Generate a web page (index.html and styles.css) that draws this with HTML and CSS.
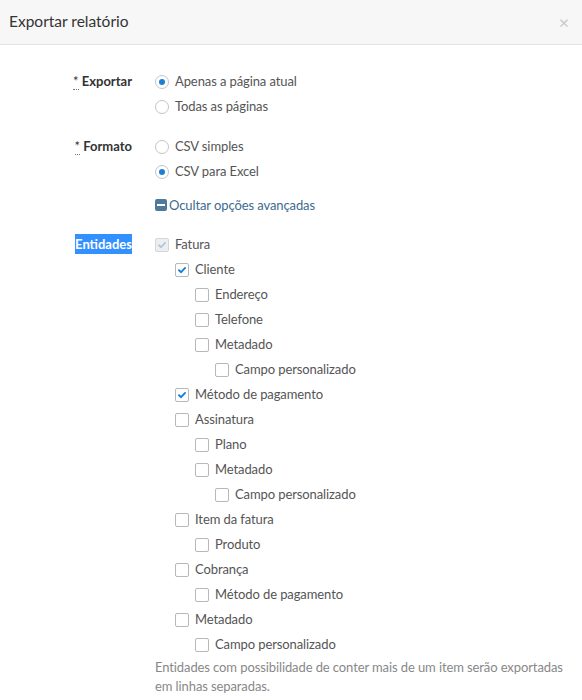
FILE: index.html
```html
<!DOCTYPE html>
<html lang="pt">
<head>
<meta charset="utf-8">
<title>Exportar relatório</title>
<link rel="stylesheet" href="styles.css">
</head>
<body>
<div class="modal">
  <div class="modal-header">
    <h1 class="modal-title">Exportar relatório</h1>
    <span class="close">×</span>
  </div>
  <div class="modal-body">
    <div class="field">
      <div class="label"><abbr class="req">*</abbr> Exportar</div>
      <div class="options">
        <div class="opt"><span class="radio checked"></span>Apenas a página atual</div>
        <div class="opt"><span class="radio"></span>Todas as páginas</div>
      </div>
    </div>
    <div class="field">
      <div class="label"><abbr class="req">*</abbr> Formato</div>
      <div class="options">
        <div class="opt"><span class="radio"></span>CSV simples</div>
        <div class="opt"><span class="radio checked"></span>CSV para Excel</div>
        <a class="toggle"><span class="minus"></span>Ocultar opções avançadas</a>
      </div>
    </div>
    <div class="field entities">
      <div class="label"><span class="selected">Entidades</span></div>
      <div class="options">
        <div class="opt"><span class="cb disabled"><svg viewBox="0 0 14 14"><path d="M3.5 7.3 L6 9.6 L10.6 4.6"/></svg></span>Fatura</div>
        <div class="tree">
          <div class="opt"><span class="cb"><svg viewBox="0 0 14 14"><path d="M3.5 7.3 L6 9.6 L10.6 4.6"/></svg></span>Cliente</div>
          <div class="tree">
            <div class="opt"><span class="cb"></span>Endereço</div>
            <div class="opt"><span class="cb"></span>Telefone</div>
            <div class="opt"><span class="cb"></span>Metadado</div>
            <div class="tree">
              <div class="opt"><span class="cb"></span>Campo personalizado</div>
            </div>
          </div>
          <div class="opt"><span class="cb"><svg viewBox="0 0 14 14"><path d="M3.5 7.3 L6 9.6 L10.6 4.6"/></svg></span>Método de pagamento</div>
          <div class="opt"><span class="cb"></span>Assinatura</div>
          <div class="tree">
            <div class="opt"><span class="cb"></span>Plano</div>
            <div class="opt"><span class="cb"></span>Metadado</div>
            <div class="tree">
              <div class="opt"><span class="cb"></span>Campo personalizado</div>
            </div>
          </div>
          <div class="opt"><span class="cb"></span>Item da fatura</div>
          <div class="tree">
            <div class="opt"><span class="cb"></span>Produto</div>
          </div>
          <div class="opt"><span class="cb"></span>Cobrança</div>
          <div class="tree">
            <div class="opt"><span class="cb"></span>Método de pagamento</div>
          </div>
          <div class="opt"><span class="cb"></span>Metadado</div>
          <div class="tree">
            <div class="opt"><span class="cb"></span>Campo personalizado</div>
          </div>
        </div>
        <p class="help">Entidades com possibilidade de conter mais de um item serão exportadas em linhas separadas.</p>
      </div>
    </div>
  </div>
</div>
</body>
</html>
```

FILE: styles.css
```css
* { box-sizing: border-box; }
html, body { margin: 0; padding: 0; background: #fff; }
body {
  font-family: Lato, "Open Sans", sans-serif;
  font-size: 13px;
  letter-spacing: -0.1px;
  color: #555;
}
.modal { width: 582px; }
.modal-header {
  height: 45px;
  background: #f7f7f7;
  border-bottom: 1px solid #e3e3e3;
  display: flex;
  align-items: center;
  justify-content: space-between;
  padding: 0 13px 0 9px;
}
.modal-title {
  margin: 0 0 2px 0;
  font-weight: 400;
  font-size: 15.5px;
  color: #333;
  letter-spacing: 0;
}
.close {
  font-size: 18px;
  color: #c8c8c8;
  line-height: 1;
  margin-top: 0;
}
.modal-body { padding: 24px 0 0 0; }
.field {
  display: grid;
  grid-template-columns: 132px 1fr;
  column-gap: 23px;
  margin-bottom: 15px;
}
.label {
  text-align: right;
  font-weight: 700;
  color: #333;
  line-height: 25px;
  letter-spacing: 0;
}
.req {
  text-decoration: none;
  border-bottom: 1px dotted #777;
  font-weight: 400;
  cursor: help;
}
.selected {
  background: #3390ff;
  color: #fff;
  padding: 2px 0;
}
.options { display: flex; flex-direction: column; }
.opt {
  display: flex;
  align-items: center;
  height: 25px;
  line-height: 25px;
  color: #555;
  white-space: nowrap;
}
.radio {
  width: 14px;
  height: 14px;
  border: 1px solid #c4c4c4;
  border-radius: 50%;
  margin-right: 6px;
  display: flex;
  align-items: center;
  justify-content: center;
  background: #fff;
  flex: none;
}
.radio.checked::after {
  content: "";
  width: 6px;
  height: 6px;
  border-radius: 50%;
  background: #1b7fd3;
}
.toggle {
  display: flex;
  align-items: center;
  height: 25px;
  margin-top: 8px;
  color: #3d6b8f;
  white-space: nowrap;
}
.minus {
  width: 12px;
  height: 12px;
  border-radius: 2px;
  background: #4b7a9c;
  margin-right: 2px;
  display: flex;
  align-items: center;
  justify-content: center;
  margin-top: 1px;
}
.minus::after {
  content: "";
  width: 8px;
  height: 2px;
  background: #fff;
}
.cb {
  width: 14px;
  height: 14px;
  border: 1px solid #b8b8b8;
  border-radius: 2px;
  background: #fff;
  margin-right: 6px;
  flex: none;
  display: flex;
}
.cb svg { width: 12px; height: 12px; }
.cb path {
  fill: none;
  stroke: #1b7fd3;
  stroke-width: 2.2;
  stroke-linecap: round;
  stroke-linejoin: round;
}
.cb.disabled { background: #eee; border-color: #d6d6d6; }
.cb.disabled path { stroke: #a8cce6; }
.tree { padding-left: 20px; display: flex; flex-direction: column; }
.help {
  margin: 1px 0 0 0;
  color: #888;
  line-height: 19px;
  padding-right: 10px;
}
```
